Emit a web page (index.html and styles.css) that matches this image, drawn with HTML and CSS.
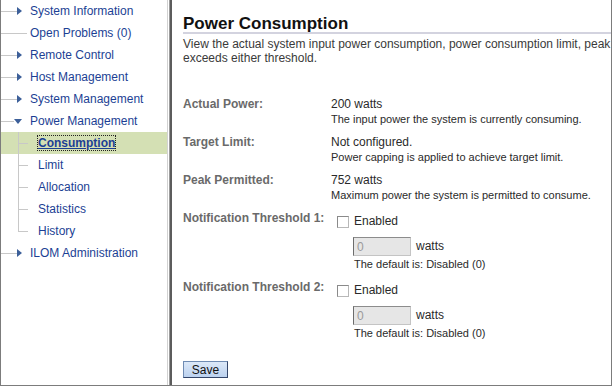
FILE: index.html
```html
<!DOCTYPE html>
<html lang="en">
<head>
  <meta charset="UTF-8">
  <title>Power Consumption</title>
  <link rel="stylesheet" href="styles.css">
</head>
<body>
  <div class="frame">
    <nav class="nav">
      <div class="node"><span class="branch"></span><span class="arrow-right"></span><a href="#">System Information</a></div>
      <div class="node"><span class="branch long"></span><a href="#" class="plain">Open Problems (0)</a></div>
      <div class="node"><span class="branch"></span><span class="arrow-right"></span><a href="#">Remote Control</a></div>
      <div class="node"><span class="branch"></span><span class="arrow-right"></span><a href="#">Host Management</a></div>
      <div class="node"><span class="branch"></span><span class="arrow-right"></span><a href="#">System Management</a></div>
      <div class="node"><span class="branch short"></span><span class="arrow-down"></span><a href="#">Power Management</a></div>
      <div class="children">
        <div class="leaf selected"><span class="stem"></span><a href="#">Consumption</a></div>
        <div class="leaf"><span class="stem"></span><a href="#">Limit</a></div>
        <div class="leaf"><span class="stem"></span><a href="#">Allocation</a></div>
        <div class="leaf"><span class="stem"></span><a href="#">Statistics</a></div>
        <div class="leaf last"><span class="stem"></span><a href="#">History</a></div>
      </div>
      <div class="node"><span class="branch"></span><span class="arrow-right"></span><a href="#">ILOM Administration</a></div>
    </nav>

    <div class="splitter"></div>

    <main class="content">
      <h1>Power Consumption</h1>
      <p class="intro">View the actual system input power consumption, power consumption limit, peak<br>exceeds either threshold.</p>

      <div class="field">
        <div class="label">Actual Power:</div>
        <div class="value">200 watts<div class="hint">The input power the system is currently consuming.</div></div>
      </div>

      <div class="field">
        <div class="label">Target Limit:</div>
        <div class="value">Not configured.<div class="hint">Power capping is applied to achieve target limit.</div></div>
      </div>

      <div class="field">
        <div class="label">Peak Permitted:</div>
        <div class="value">752 watts<div class="hint">Maximum power the system is permitted to consume.</div></div>
      </div>

      <div class="field threshold">
        <div class="label">Notification Threshold 1:</div>
        <div class="value">
          <label class="check"><input type="checkbox"> Enabled</label>
          <div class="watts"><input type="text" value="0" disabled> watts</div>
          <div class="hint indent">The default is: Disabled (0)</div>
        </div>
      </div>

      <div class="field threshold">
        <div class="label">Notification Threshold 2:</div>
        <div class="value">
          <label class="check"><input type="checkbox"> Enabled</label>
          <div class="watts"><input type="text" value="0" disabled> watts</div>
          <div class="hint indent">The default is: Disabled (0)</div>
        </div>
      </div>

      <button type="button" class="save">Save</button>
    </main>
  </div>
</body>
</html>
```

FILE: styles.css
```css
body {
  margin: 0;
  font-family: 'Liberation Sans', Arial, sans-serif;
  font-size: 12px;
  background-color: white;
}

.frame {
  display: flex;
  width: 612px;
  height: 386px;
  box-sizing: border-box;
  border-left: 1px solid #7c7c7c;
  border-right: 1px solid #7c7c7c;
  border-bottom: 1px solid #7c7c7c;
  overflow: hidden;
}

/* left tree */
.nav {
  width: 166px;
  flex: none;
}

.node,
.leaf {
  display: flex;
  align-items: center;
  height: 22px;
}

.nav a {
  color: #1c3f94;
  text-decoration: none;
  white-space: nowrap;
}

.branch {
  flex: none;
  width: 16px;
  height: 1px;
  background-color: #c8c8c8;
}

.branch.long {
  width: 26px;
}

.branch.short {
  width: 13px;
}

.arrow-right {
  flex: none;
  width: 0;
  height: 0;
  border-left: 5px solid #3c5f99;
  border-top: 4px solid transparent;
  border-bottom: 4px solid transparent;
  margin-right: 8px;
}

.arrow-down {
  flex: none;
  width: 0;
  height: 0;
  border-top: 5px solid #3c5f99;
  border-left: 4px solid transparent;
  border-right: 4px solid transparent;
  margin-right: 8px;
}

.node a.plain {
  margin-left: 3px;
}

.leaf {
  padding-left: 17px;
}

.stem {
  flex: none;
  align-self: stretch;
  width: 9px;
  border-left: 1px solid #c8c8c8;
  background: linear-gradient(#c8c8c8, #c8c8c8) no-repeat 0 50% / 100% 1px;
  margin-right: 10px;
}

.leaf.last .stem {
  align-self: flex-start;
  height: 12px;
  background-position: 0 100%;
}

.leaf.selected {
  background-color: #d4e0b4;
}

.leaf.selected a {
  font-weight: bold;
  text-decoration: underline;
  outline: 1px dotted #222;
}

.splitter {
  flex: none;
  width: 5px;
  box-sizing: border-box;
  border-left: 1px solid #d2d2d2;
  border-right: 2px solid #5c5c5c;
  background: linear-gradient(to right, #fff 1px, #9c9c9c 1px);
}

/* right content */
.content {
  flex: 1;
  min-width: 0;
  overflow: hidden;
  padding-left: 11px;
}

h1 {
  margin: 15px 0 0;
  font-size: 17px;
  line-height: 17px;
  color: #111;
  border-bottom: 2px solid #d3d3df;
  white-space: nowrap;
}

.intro {
  margin: 3px 0 32px;
  line-height: 14px;
  color: #3a3a3a;
  white-space: nowrap;
}

.field {
  display: grid;
  grid-template-columns: 148px 1fr;
  margin-bottom: 9px;
  line-height: 15px;
}

.label {
  font-weight: bold;
  color: #6a6a6a;
  white-space: nowrap;
}

.value {
  color: #2a2a2a;
}

.hint {
  font-size: 11px;
  line-height: 14px;
  color: #2a2a2a;
}

.threshold .value {
  padding-top: 3px;
}

.check {
  display: flex;
  align-items: center;
  height: 15px;
}

.check input {
  appearance: none;
  width: 12px;
  height: 12px;
  margin: 0 5px 0 6px;
  box-sizing: border-box;
  border: 1px solid #8a8a8a;
  border-right-color: #b8b8b8;
  border-bottom-color: #b8b8b8;
  background-color: white;
}

.watts {
  display: flex;
  align-items: center;
  margin: 8px 0 1px 22px;
  color: #2a2a2a;
}

.watts input {
  width: 58px;
  height: 19px;
  box-sizing: border-box;
  margin: 0 5px 0 0;
  padding: 0 3px;
  font-family: inherit;
  font-size: 12px;
  color: #9a9a9a;
  background-color: #e6e6e6;
  border: 1px solid #c4c4c4;
  border-top-color: #8c8c8c;
  border-left-color: #6c6c6c;
}

.hint.indent {
  margin-left: 23px;
}

.save {
  margin-top: 12px;
  width: 45px;
  height: 17px;
  padding: 0;
  font-family: inherit;
  font-size: 12px;
  line-height: 14px;
  color: #111;
  background: linear-gradient(#dce8f8, #bcd2ef);
  border: 1px solid #6f8bb3;
  border-right-color: #34466a;
  border-bottom-color: #34466a;
  cursor: pointer;
}
```
